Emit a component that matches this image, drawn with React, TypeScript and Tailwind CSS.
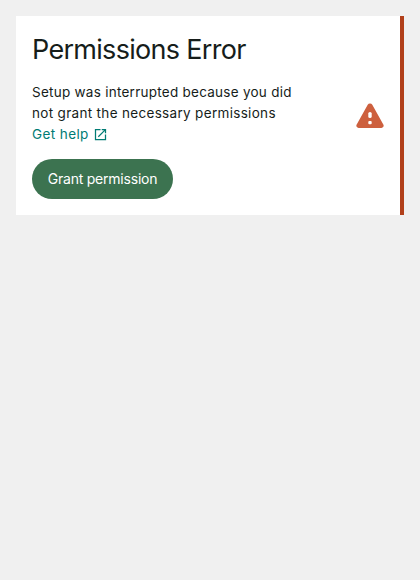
export default function App() {
  return (
    <div className="min-h-screen bg-[#f0f0f0] p-4 font-['Inter',sans-serif] text-[#161d1a]">
      <section className="flex h-[199px] items-center justify-between border-r-4 border-[#b13f1a] bg-white p-4">
        <div className="h-full">
          <h1 className="h-9 whitespace-nowrap text-[27px] leading-9 tracking-[-0.7px]">
            <span>Permissions Error</span>
          </h1>
          <p className="mt-[14px] whitespace-nowrap text-[13.5px] leading-[21px] tracking-[0.26px]">
            <span>Setup was interrupted because you did</span><br />
            <span className="tracking-[0.32px]">not grant the necessary permissions</span>
          </p>
          <a href="#" className="flex h-[21px] items-center gap-1 text-[13.5px] leading-[21px] tracking-[0.4px] text-[#007b74]">
            <span>Get help</span>
            <svg viewBox="0 0 24 24" className="size-[15px]" fill="currentColor">
              <path d="M19 19H5V5h7V3H3v18h18v-9h-2v7zM14 3v2h3.6l-9.8 9.8 1.4 1.4L19 6.4V10h2V3h-7z" />
            </svg>
          </a>
          <button className="mt-[14px] h-10 w-[141px] rounded-full bg-[#3c7350] text-sm tracking-[-0.22px] text-white">Grant permission</button>
        </div>
        <svg viewBox="0 0 28 26" className="h-[26px] w-7">
          <path d="M11.7 1.8.7 21.5A2.3 2.3 0 0 0 2.7 25h22.6a2.3 2.3 0 0 0 2-3.5L16.3 1.8a2.6 2.6 0 0 0-4.6 0Z" fill="#cd603e" />
          <path d="M14 10.6v2.8" stroke="white" strokeWidth="3.4" strokeLinecap="round" />
          <rect x="12.3" y="18" width="3.4" height="3.2" rx="1" fill="white" />
        </svg>
      </section>
    </div>
  )
}
